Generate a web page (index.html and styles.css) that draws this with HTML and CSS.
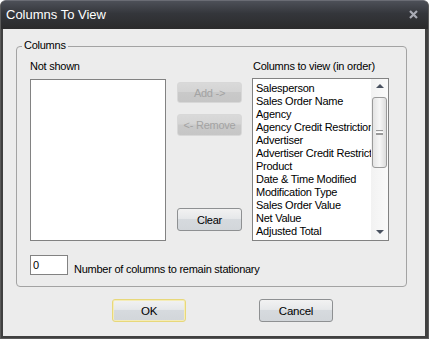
FILE: index.html
```html
<!DOCTYPE html>
<html lang="en">
<head>
<meta charset="utf-8">
<link rel="stylesheet" href="styles.css">
</head>
<body>
<div class="window">
  <div class="titlebar">
    <span class="title">Columns To View</span>
    <svg class="close" width="9" height="9" viewBox="0 0 9 9">
      <path d="M1 1 L8 8 M8 1 L1 8" stroke="#a9abb5" stroke-width="2.2" fill="none"/>
    </svg>
  </div>
  <div class="client">
    <div class="group">
      <span class="legend">Columns</span>
      <div class="lists">
        <div class="column">
          <div class="label">Not shown</div>
          <div class="listbox left-list"></div>
        </div>
        <div class="buttons">
          <button class="btn btn-disabled add-btn">Add -&gt;</button>
          <button class="btn btn-disabled remove-btn">&lt;- Remove</button>
          <button class="btn clear-btn">Clear</button>
        </div>
        <div class="column">
          <div class="label">Columns to view (in order)</div>
          <div class="listbox right-list">
            <div class="items">
              <div>Salesperson</div>
              <div>Sales Order Name</div>
              <div>Agency</div>
              <div>Agency Credit Restriction</div>
              <div>Advertiser</div>
              <div>Advertiser Credit Restriction</div>
              <div>Product</div>
              <div>Date &amp; Time Modified</div>
              <div>Modification Type</div>
              <div>Sales Order Value</div>
              <div>Net Value</div>
              <div>Adjusted Total</div>
              <div>Contract Value</div>
            </div>
            <div class="scrollbar">
              <div class="arrow arrow-up"></div>
              <div class="thumb"><span class="grip"></span></div>
              <div class="track"></div>
              <div class="arrow arrow-down"></div>
            </div>
          </div>
        </div>
      </div>
      <div class="stationary">
        <input type="text" class="num-input" value="0">
        <span>Number of columns to remain stationary</span>
      </div>
    </div>
    <div class="actions">
      <button class="btn action-btn default-btn">OK</button>
      <button class="btn action-btn">Cancel</button>
    </div>
  </div>
</div>
</body>
</html>
```

FILE: styles.css
```css
* {
  box-sizing: border-box;
}

body {
  margin: 0;
  font-family: "Liberation Sans", Arial, sans-serif;
  font-size: 11px;
  letter-spacing: -0.25px;
  color: #000;
  background: #fff;
}

.window {
  width: 429px;
  height: 339px;
  display: flex;
  flex-direction: column;
  background: #404040;
  border-radius: 6px 6px 0 0;
  border: 1px solid #5a5a5a;
  border-top-color: #6a6c74;
}

.titlebar {
  height: 28px;
  display: flex;
  align-items: center;
  justify-content: space-between;
  padding: 0 10px 2px 5px;
  background: linear-gradient(#4d5058, #34363b 45%, #2b2b2c);
  border-radius: 5px 5px 0 0;
  color: #fff;
}

.title {
  font-size: 13px;
  letter-spacing: 0;
}

.close {
  margin-top: 1px;
}

.client {
  flex: 1;
  margin: 0 3px 2px 2px;
  background: #ececec;
  padding: 17px 0 0 13px;
}

.group {
  position: relative;
  width: 391px;
  border: 1px solid #a3a3a3;
  border-radius: 4px;
  padding: 13px 0 11px 13px;
}

.legend {
  position: absolute;
  top: -8px;
  left: 5px;
  padding: 0 2px;
  background: #ececec;
  line-height: 13px;
}

.lists {
  display: flex;
  gap: 11px;
}

.column {
  display: flex;
  flex-direction: column;
}

.label {
  line-height: 13px;
  margin-bottom: 5px;
}

.listbox {
  height: 163px;
  background: #fff;
  border: 1px solid #828282;
}

.left-list {
  width: 136px;
  margin-top: 1px;
  height: 162px;
}

.right-list {
  width: 137px;
  display: flex;
  margin-left: -1px;
}

.items {
  flex: 1;
  overflow: hidden;
  padding: 3px 0 0 3px;
  line-height: 13px;
  white-space: nowrap;
}

.scrollbar {
  width: 17px;
  display: flex;
  flex-direction: column;
  align-items: center;
  background: linear-gradient(90deg, #f2f2f2, #fafafa);
  padding: 0 1px;
}

.arrow {
  width: 0;
  height: 0;
  border-left: 4px solid transparent;
  border-right: 4px solid transparent;
}

.arrow-up {
  margin-top: 5px;
  border-bottom: 4px solid #4a5260;
}

.arrow-down {
  margin: 0 0 6px;
  border-top: 4px solid #4a5260;
}

.thumb {
  width: 15px;
  height: 71px;
  margin-top: 9px;
  border: 1px solid #9a9a9a;
  border-radius: 3px;
  background: linear-gradient(90deg, #e4e4e4, #f6f6f6 50%, #dcdcdc);
  display: flex;
  align-items: center;
  justify-content: center;
}

.grip {
  width: 7px;
  height: 5px;
  border-top: 1px solid #9a9a9a;
  border-bottom: 1px solid #9a9a9a;
  background: linear-gradient(#fff 1px, #9a9a9a 1px, #9a9a9a 2px, #fff 2px);
  background-position: 0 1px;
  background-repeat: no-repeat;
  background-size: 100% 3px;
}

.track {
  flex: 1;
}

.buttons {
  width: 65px;
  display: flex;
  flex-direction: column;
  padding-top: 22px;
  padding-bottom: 10px;
}

.btn {
  font-family: "Liberation Sans", Arial, sans-serif;
  font-size: 11px;
  letter-spacing: -0.25px;
  padding: 0;
  border-radius: 3px;
  border: 1px solid #8e9092;
  background: linear-gradient(#f2f2f2, #e6e8ea 45%, #d6dade 50%, #d2d6da);
  color: #000;
}

.btn-disabled {
  color: #a3a3a3;
  border-color: #d8d8d8;
  background: linear-gradient(#d9d9d9, #d4d4d4 45%, #c9c9c9 50%, #c6c6c6);
}

.add-btn {
  height: 21px;
}

.remove-btn {
  height: 22px;
  margin-top: 11px;
}

.clear-btn {
  height: 23px;
  margin-top: auto;
}

.stationary {
  display: flex;
  align-items: flex-end;
  gap: 6px;
  margin-top: 14px;
}

.stationary span {
  line-height: 13px;
  margin-bottom: -1px;
}

.num-input {
  width: 38px;
  height: 20px;
  border: 1px solid #828282;
  padding: 0 2px;
  font-family: "Liberation Sans", Arial, sans-serif;
  font-size: 11px;
  background: #fff;
}

.actions {
  display: flex;
  gap: 73px;
  padding-left: 96px;
  margin-top: 12px;
}

.action-btn {
  width: 74px;
  height: 23px;
  font-size: 11.5px;
}

.default-btn {
  border-color: #e8d87a;
  box-shadow: inset 0 0 0 1px #f4ecb8;
}
```
